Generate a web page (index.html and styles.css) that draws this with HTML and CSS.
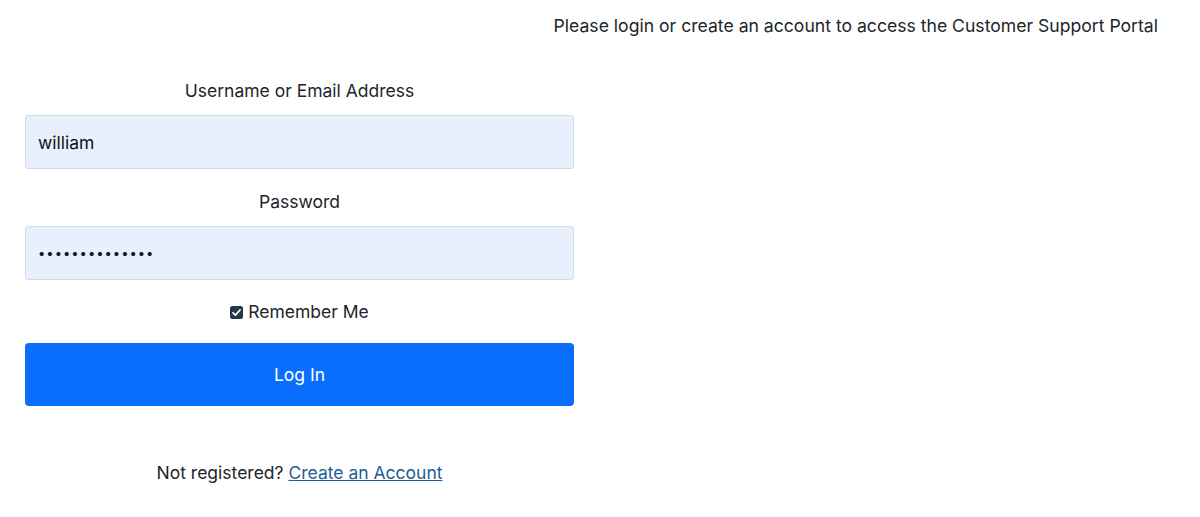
FILE: index.html
```html
<!DOCTYPE html>
<html>
<head>
<meta charset="utf-8">
<link rel="stylesheet" href="styles.css">
</head>
<body>
<div class="notice">Please login or create an account to access the Customer Support Portal</div>
<form class="login">
  <label class="label" for="user">Username or Email Address</label>
  <input class="field" id="user" type="text" value="william">
  <label class="label" for="pass">Password</label>
  <input class="field" id="pass" type="password" value="williampasswrd">
  <label class="remember"><span class="check"><svg width="13" height="13" viewBox="0 0 13 13"><rect x="0" y="0" width="13" height="13" rx="2.5" fill="#23384f"/><path d="M3 6.8 L5.4 9.1 L10 4" fill="none" stroke="#fff" stroke-width="1.8" stroke-linecap="round" stroke-linejoin="round"/></svg></span>Remember Me</label>
  <button class="btn" type="button">Log In</button>
  <p class="register">Not registered? <a href="#">Create an Account</a></p>
</form>
</body>
</html>
```
FILE: styles.css
```css
html, body {
  margin: 0;
  padding: 0;
  background: #fff;
}
body {
  font-family: Inter, "Liberation Sans", sans-serif;
  font-size: 18px;
  color: #212529;
  width: 1200px;
  height: 517px;
  overflow: hidden;
}
.notice {
  display: flex;
  justify-content: flex-end;
  padding: 15px 42px 0 0;
  line-height: 22px;
  font-size: 17.6px;
}
.login {
  width: 549px;
  margin: 43px 0 0 25px;
  display: flex;
  flex-direction: column;
  align-items: stretch;
}
.label {
  text-align: center;
  line-height: 22px;
  font-size: 17.5px;
  margin-bottom: 13px;
}
.field {
  box-sizing: border-box;
  height: 54px;
  border: 1px solid #d4dae3;
  border-radius: 3px;
  background: #e8f0fe;
  font-family: inherit;
  font-size: 17.5px;
  color: #111;
  padding: 0 12px;
  margin-bottom: 22px;
}
#pass {
  font-size: 13px;
  letter-spacing: 1px;
  margin-bottom: 21px;
}
.remember {
  display: flex;
  justify-content: center;
  align-items: center;
  gap: 5px;
  line-height: 22px;
  font-size: 17.5px;
}
.check {
  display: flex;
}
.btn {
  margin-top: 20px;
  height: 63px;
  border: none;
  border-radius: 4px;
  background: #0a6efd;
  color: #fff;
  font-family: inherit;
  font-size: 17.5px;
}
.register {
  text-align: center;
  margin: 56px 0 0;
  line-height: 22px;
  font-size: 17.5px;
}
.register a {
  color: #245b98;
  text-decoration: underline;
}
```
